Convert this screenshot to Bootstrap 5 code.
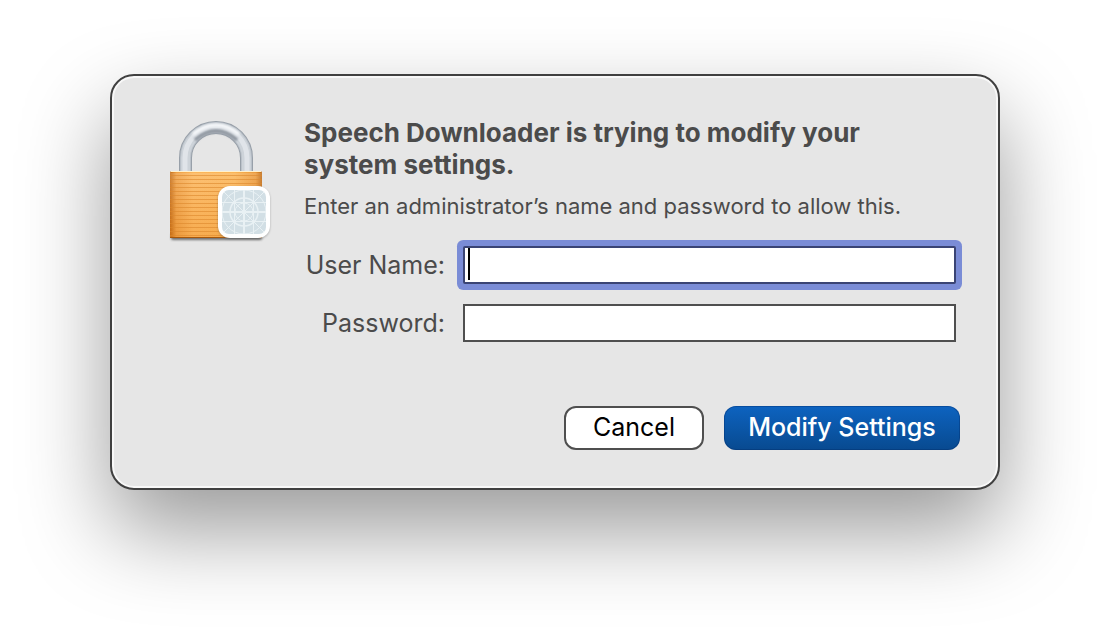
<!DOCTYPE html>
<html lang="en">
<head>
<meta charset="utf-8">
<meta name="viewport" content="width=device-width, initial-scale=1">
<title>Speech Downloader</title>
<link href="https://cdn.jsdelivr.net/npm/bootstrap@5.3.0/dist/css/bootstrap.min.css" rel="stylesheet">
<style>
  body { font-family: Inter, "Liberation Sans", sans-serif; color: #4b4b4b; background: #fff; }
  .stage { padding: 74px 110px; }
  .auth-dialog {
    max-width: 890px; padding: 41px 38px 38px 56px; gap: 32px;
    background: #e6e6e6; border: 2px solid #404040; border-radius: 24px;
    box-shadow: inset 0 0 0 2px #f8f8f8, 0 40px 88px rgba(0,0,0,.4);
  }
  .lock-icon { width: 104px; height: 128px; }
  .auth-title { font-size: 26px; line-height: 32px; font-weight: 700; }
  .auth-hint { font-size: 22px; line-height: 28px; margin: 11px 0 26px; }
  .fields { gap: 20px; margin-bottom: 64px; }
  .field { gap: 18px; }
  .field label { width: 141px; font-size: 25px; line-height: 38px; text-align: right; white-space: nowrap; }
  .field .form-control {
    height: 38px; padding: 0 4px; border: 2px solid #4f4f4f; border-radius: 0;
    font-size: 24px; background-color: #fff; box-shadow: none; caret-color: transparent;
  }
  .field .is-active {
    border-color: #3a4474; box-shadow: 0 0 0 6px #7a8cd6; border-radius: 2px;
    background: linear-gradient(#000, #000) 3px 0 / 2px 32px no-repeat #fff;
  }
  .actions { gap: 20px; }
  .actions .btn { height: 44px; padding: 0 0 2px; font-size: 25px; line-height: 38px; border-radius: 12px; }
  .btn-cancel, .btn-cancel:hover { width: 140px; color: #000; background: #fff; border: 2px solid #4f4f4f; }
  .btn-modify, .btn-modify:hover {
    width: 236px; color: #fff; border: 0; font-weight: 500; background: linear-gradient(#0d63c0, #084a90);
    box-shadow: inset 0 0 0 1px rgba(0,40,100,.35);
  }
</style>
</head>
<body class="min-vh-100">
<main class="stage">
  <section class="auth-dialog d-flex align-items-start mx-auto" role="dialog" aria-labelledby="title">
    <svg class="lock-icon flex-shrink-0" viewBox="0 -1 104 128" aria-hidden="true">
      <defs>
        <linearGradient id="body"><stop offset="0" stop-color="#c46c16"/><stop offset=".07" stop-color="#efa045"/><stop offset=".25" stop-color="#fcb65c"/><stop offset=".7" stop-color="#fbb557"/><stop offset=".93" stop-color="#eb9a3c"/><stop offset="1" stop-color="#bd6914"/></linearGradient>
        <linearGradient id="depth" x2="0" y2="1"><stop offset="0" stop-color="#fff" stop-opacity=".14"/><stop offset="1" stop-color="#d46a00" stop-opacity=".12"/></linearGradient>
        <pattern id="lines" width="6" height="4" patternUnits="userSpaceOnUse"><path d="M0 1.500H6" stroke="#dc872b" stroke-opacity=".6"/></pattern>
        <filter id="soft" x="-10%" y="-30%" width="120%" height="160%"><feGaussianBlur stdDeviation="1"/></filter>
        <clipPath id="tile"><rect x="54" y="72" width="44" height="44" rx="6"/></clipPath>
      </defs>
      <g fill="none">
        <path d="M17.500 54V40a30.500 30.500 0 0 1 61 0V54" stroke="#98a0a9" stroke-width="13"/>
        <path d="M17.500 54V40a30.500 30.500 0 0 1 61 0V54" stroke="#bac1c9" stroke-width="11"/>
        <path d="M17.500 54V40a30.500 30.500 0 0 1 61 0V54" stroke="#cdd3d9" stroke-width="9"/>
        <path d="M17 54V40a31 31 0 0 1 62 0V54" stroke="#e0e4e9" stroke-width="5"/>
        <path d="M27 22Q48 4 69 22" stroke="#9299a2" stroke-width="4" filter="url(#soft)"/>
        <path d="M25 16Q48-2 71 16" stroke="#f6f8fa" stroke-width="3" filter="url(#soft)"/>
      </g>
      <rect x="3" y="116" width="91" height="6" rx="2" fill="#404040" opacity=".7" filter="url(#soft)"/>
      <rect x="2" y="53" width="92" height="67" rx="2" fill="url(#body)"/>
      <rect x="2" y="55" width="92" height="64" fill="url(#depth)"/>
      <rect x="2" y="55" width="92" height="64" fill="url(#lines)"/>
      <path d="M3 53.500H93" stroke="#fff1cd"/>
      <path d="M2 119.500H94" stroke="#a95709"/>
      <rect x="50" y="69" width="52" height="52" rx="12" fill="#555" opacity=".4" filter="url(#soft)"/>
      <rect x="50" y="68" width="52" height="52" rx="12" fill="#fff"/>
      <rect x="54" y="72" width="44" height="44" rx="7" fill="#d2dfe5"/>
      <g clip-path="url(#tile)" fill="none" stroke="#e9f1f4">
        <path d="M54 94H98M76 72V116" stroke-width="2"/>
        <path d="M54 84.500H98M54 103.500H98M66.500 72V116M85.500 72V116M54 72L98 116M98 72L54 116"/>
        <circle cx="76" cy="94" r="22"/><circle cx="76" cy="94" r="14" stroke-width="1.500"/><circle cx="76" cy="94" r="9"/>
      </g>
    </svg>
    <div class="flex-grow-1">
      <h1 id="title" class="auth-title mb-0">Speech Downloader is trying to modify your<br>system settings.</h1>
      <p class="auth-hint">Enter an administrator’s name and password to allow this.</p>
      <form>
        <div class="fields d-flex flex-column pe-1">
          <div class="field d-flex">
            <label for="user" class="flex-shrink-0">User Name:</label>
            <input id="user" type="text" class="form-control is-active" autocomplete="off">
          </div>
          <div class="field d-flex">
            <label for="pass" class="flex-shrink-0">Password:</label>
            <input id="pass" type="password" class="form-control" autocomplete="off">
          </div>
        </div>
        <div class="actions d-flex justify-content-end">
          <button type="button" class="btn btn-cancel">Cancel</button>
          <button type="submit" class="btn btn-modify">Modify Settings</button>
        </div>
      </form>
    </div>
  </section>
</main>
<script src="https://cdn.jsdelivr.net/npm/bootstrap@5.3.0/dist/js/bootstrap.bundle.min.js"></script>
</body>
</html>
